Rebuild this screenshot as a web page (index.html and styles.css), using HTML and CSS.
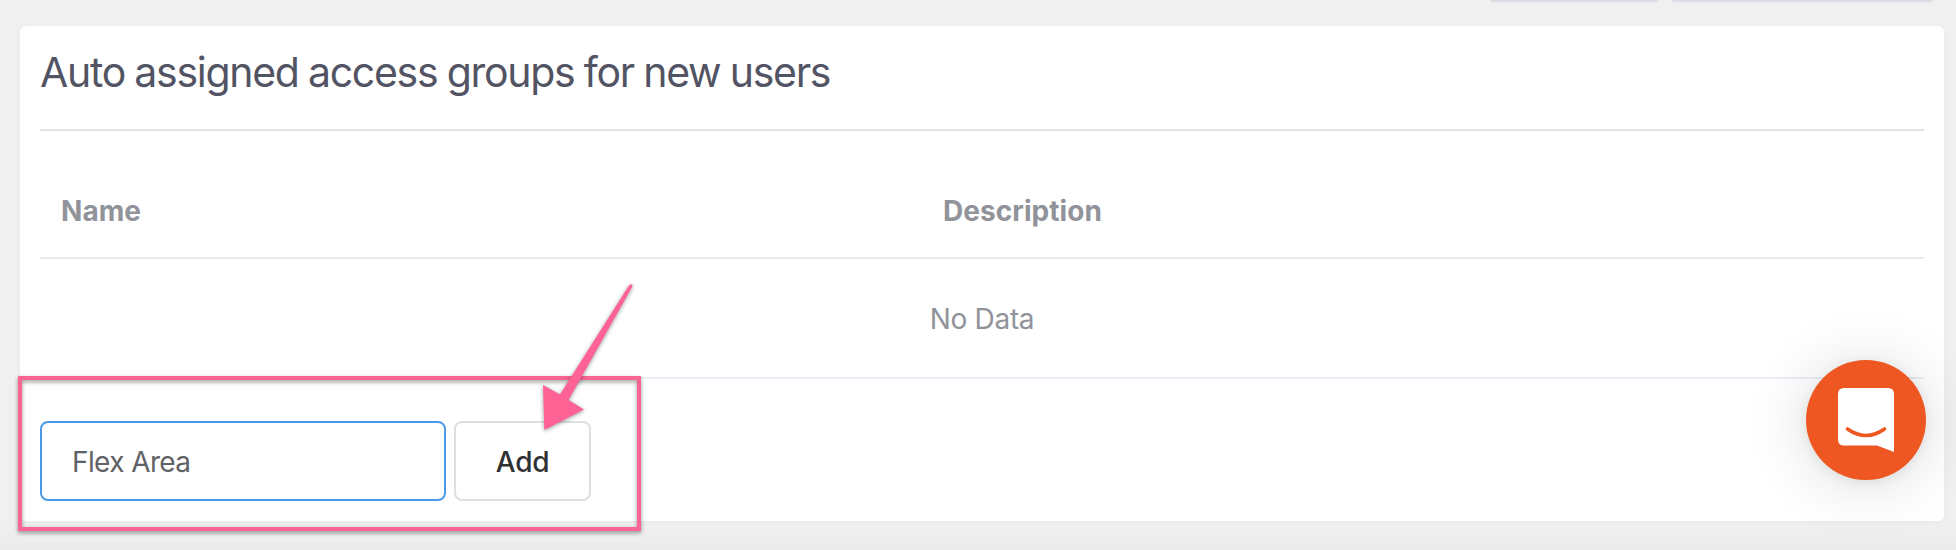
FILE: index.html
```html
<!DOCTYPE html>
<html lang="en">
<head>
<meta charset="utf-8">
<title>Access groups</title>
<link rel="stylesheet" href="styles.css">
</head>
<body>
<div class="toolbar"><div class="tab tab-small"></div><div class="tab tab-large"></div></div>
<main class="card">
  <h1 class="title"><span class="title-text">Auto assigned access groups for new users</span></h1>
  <div class="table">
    <div class="table-head"><div class="cell name">Name</div><div class="cell description">Description</div></div>
    <div class="table-empty"><span class="empty-text">No Data</span></div>
  </div>
  <form class="form">
    <input class="field" type="text" value="Flex Area" aria-label="Group">
    <button class="add" type="button"><span class="add-text">Add</span></button>
  </form>
</main>
<div class="highlight"></div>
<svg class="arrow" width="130" height="170" viewBox="530 275 130 170">
  <path d="M632.4 285.2Q630.5 283 628.8 285.8L560 394.5L543 385L544.3 430L584 409.5L568.5 400L632.4 286.5Z" fill="#ff6396"/>
</svg>
<div class="chat">
  <svg class="chat-icon" width="120" height="120" viewBox="0 0 120 120">
    <path d="M38 28H82Q88 28 88 34V92L71 85.500H38Q32 85.500 32 79.500V34Q32 28 38 28Z" fill="#fff"/>
    <path d="M41.500 69Q60 82 78.500 69" fill="none" stroke="#ee5622" stroke-width="3.600" stroke-linecap="round"/>
  </svg>
</div>
</body>
</html>
```
FILE: styles.css
```css
* { box-sizing: border-box; }
body {
  margin: 0;
  height: 550px;
  overflow: hidden;
  position: relative;
  background: linear-gradient(#f0f0f0 520px, #ebebeb 550px);
  font-family: Inter, "Liberation Sans", sans-serif;
  font-size: 28px;
  line-height: 40px;
}
.toolbar { display: flex; justify-content: flex-end; gap: 14px; height: 26px; padding-right: 23px; }
.tab { height: 2px; background: #dcdde2; border-radius: 0 0 3px 3px; box-shadow: 0 1px 3px #e8e9ef; }
.tab-small { width: 168px; }
.tab-large { width: 261px; }
.card {
  width: 1924px;
  height: 495px;
  margin-left: 20px;
  padding: 0 20px;
  background: #fff;
  border-radius: 6px;
  box-shadow: 0 1px 4px #e6e8ee;
}
.title {
  margin: 0;
  height: 105px;
  padding: 20px 0 0;
  border-bottom: 2px solid #e2e2e2;
  color: #525464;
  font-size: 41px;
  line-height: 52px;
  font-weight: 400;
  letter-spacing: -1.300px;
  word-spacing: -0.800px;
}
.table-head {
  display: grid;
  grid-template-columns: 882px 1fr;
  height: 128px;
  padding-top: 60px;
  border-bottom: 2px solid #e8eaed;
  color: #909399;
  font-weight: 700;
  letter-spacing: 0.050px;
}
.cell { padding-left: 21px; }
.table-empty {
  display: flex;
  align-items: center;
  justify-content: center;
  height: 120px;
  padding-top: 2px;
  border-bottom: 2px solid #ebeef5;
  color: #909399;
  letter-spacing: -0.300px;
}
.form { display: flex; gap: 8px; padding-top: 42px; }
.field, .add {
  height: 80px;
  border-radius: 8px;
  background: #fff;
  font: inherit;
}
.field { width: 406px; padding: 2px 30px 0; border: 2px solid #4b9be8; color: #606266; outline: none; letter-spacing: -0.600px; }
.add { width: 137px; padding: 2px 0 0; border: 2px solid #dcdfe3; color: #303133; font-weight: 500; letter-spacing: -0.300px; }
.highlight {
  position: absolute;
  left: 18px;
  top: 376px;
  width: 623px;
  height: 155px;
  border: 4px solid #f96593;
  filter: drop-shadow(0 2px 2px rgba(0, 0, 0, 0.4));
}
.arrow { position: absolute; left: 530px; top: 275px; filter: drop-shadow(0 1px 2px rgba(0, 0, 0, 0.4)); }
.chat {
  position: absolute;
  left: 1806px;
  top: 360px;
  width: 120px;
  height: 120px;
  border-radius: 50%;
  background: #ee5622;
  box-shadow: 0 2px 12px rgba(0, 0, 0, 0.08), 0 4px 64px rgba(0, 0, 0, 0.14);
}
.chat-icon { display: block; }
```
